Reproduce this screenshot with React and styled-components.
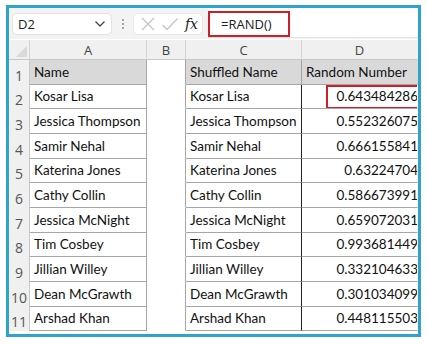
import React from 'react'
import styled, { createGlobalStyle } from 'styled-components'

const GlobalStyle = createGlobalStyle`
  html, body {
    margin: 0;
    padding: 0;
    background: #fff;
  }
  body {
    font-family: Lato, 'Liberation Sans', sans-serif;
  }
`

const Page = styled.div`
  width: 427px;
  height: 345px;
  padding: 5px 0 0 6px;
  box-sizing: border-box;
`

const Frame = styled.div`
  width: 415px;
  height: 332px;
  box-sizing: border-box;
  border: 3px solid #2ea3cb;
  overflow: hidden;
  display: flex;
  flex-direction: column;
  background: #fff;
`

const Toolbar = styled.div`
  height: 31px;
  display: flex;
  align-items: center;
  background: #f3f3f3;
  padding-left: 3px;
  flex-shrink: 0;
`

const NameBox = styled.div`
  width: 100px;
  height: 22px;
  box-sizing: border-box;
  background: #fff;
  border: 1px solid #e2e2e2;
  border-radius: 5px;
  display: flex;
  align-items: center;
  justify-content: space-between;
  padding: 0 5px 0 5px;
  font-family: 'Open Sans', sans-serif;
  font-size: 13px;
  color: #222;
`

const Dots = styled.div`
  width: 21px;
  display: flex;
  flex-direction: column;
  align-items: center;
  gap: 2px;
  span {
    width: 2px;
    height: 2px;
    background: #888;
    border-radius: 1px;
  }
`

const FxBox = styled.div`
  width: 70px;
  height: 22px;
  box-sizing: border-box;
  background: #fff;
  border: 1px solid #e8e8e8;
  border-radius: 5px;
  display: flex;
  align-items: center;
  justify-content: space-between;
  padding: 0 4px 0 6px;
`

const Fx = styled.span`
  font-family: 'DejaVu Serif', 'Liberation Serif', serif;
  font-style: italic;
  font-size: 14px;
  color: #222;
`

const FormulaBar = styled.div`
  flex: 1;
  height: 29px;
  margin-left: 5px;
  background: #fff;
  border-bottom: 1px solid #e2e2e2;
  display: flex;
  align-items: center;
  align-self: flex-start;
`

const FormulaValue = styled.div`
  width: 82px;
  height: 26px;
  box-sizing: border-box;
  border: 2px solid #cc1f28;
  display: flex;
  align-items: center;
  padding-left: 11px;
  font-size: 13px;
  color: #222;
  font-family: 'Open Sans', sans-serif;
  margin-top: 2px;
`

const Grid = styled.div`
  display: grid;
  grid-template-columns: 21px 117px 39px 116px 116px;
  grid-auto-rows: 24.67px;
  grid-template-rows: 20px;
  padding-top: 1px;
  background: #fff;
`

const ColHead = styled.div`
  background: #f0f0f0;
  border-right: 1px solid ${p => (p.$light ? '#f0f0f0' : '#d4d4d4')};
  border-bottom: 1px solid #c8c8c8;
  display: flex;
  align-items: center;
  justify-content: center;
  font-family: 'Open Sans', sans-serif;
  font-size: 13px;
  color: #444;
  position: relative;
`

const Corner = styled(ColHead)`
  &::after {
    content: '';
    position: absolute;
    right: 2px;
    bottom: 2px;
    border-style: solid;
    border-width: 0 0 11px 11px;
    border-color: transparent transparent #d9d9d9 transparent;
  }
`

const RowHead = styled.div`
  background: #f0f0f0;
  border-right: 1px solid #c8c8c8;
  display: flex;
  align-items: flex-end;
  justify-content: center;
  padding-bottom: 0;
  box-sizing: border-box;
  font-family: 'Open Sans', sans-serif;
  font-size: 14px;
  color: #555;
`

const Cell = styled.div`
  box-sizing: border-box;
  display: flex;
  align-items: center;
  justify-content: ${p => (p.$num ? 'flex-end' : 'flex-start')};
  padding: 0 ${p => (p.$num ? '0' : '4px')};
  font-size: 13.5px;
  color: #111;
  white-space: nowrap;
  overflow: hidden;
  background: ${p => (p.$head ? '#d9d9d9' : '#fff')};
  border-bottom: 1px solid ${p => (p.$blank ? 'transparent' : '#a6a6a6')};
  border-right: 1px solid ${p => p.$edge || 'transparent'};
  position: relative;
`

const Selected = styled.div`
  position: absolute;
  top: 0;
  bottom: -1px;
  left: 24px;
  right: -2px;
  border: 2px solid #cc1f28;
`

const NumText = styled.span`
  margin-right: -1px;
`

const rows = [
  ['Kosar Lisa', 'Kosar Lisa', '0.643484286'],
  ['Jessica Thompson', 'Jessica Thompson', '0.552326075'],
  ['Samir Nehal', 'Samir Nehal', '0.666155841'],
  ['Katerina Jones', 'Katerina Jones', '0.63224704'],
  ['Cathy Collin', 'Cathy Collin', '0.586673991'],
  ['Jessica McNight', 'Jessica McNight', '0.659072031'],
  ['Tim Cosbey', 'Tim Cosbey', '0.993681449'],
  ['Jillian Willey', 'Jillian Willey', '0.332104633'],
  ['Dean McGrawth', 'Dean McGrawth', '0.301034099'],
  ['Arshad Khan', 'Arshad Khan', '0.448115503'],
]

const Chevron = () => (
  <svg width="12" height="8" viewBox="0 0 12 8">
    <path d="M1.5 1.5 L6 6 L10.5 1.5" fill="none" stroke="#444" strokeWidth="1.3" />
  </svg>
)

const Cross = () => (
  <svg width="16" height="16" viewBox="0 0 16 16">
    <path d="M2 2 L14 14 M14 2 L2 14" stroke="#c4c4c4" strokeWidth="1.3" />
  </svg>
)

const Check = () => (
  <svg width="18" height="16" viewBox="0 0 18 16">
    <path d="M1.5 9 L6 13.5 L16.5 2.5" fill="none" stroke="#c4c4c4" strokeWidth="1.3" />
  </svg>
)

export default function App() {
  return (
    <>
      <GlobalStyle />
      <Page>
        <Frame>
          <Toolbar>
            <NameBox>
              <span>D2</span>
              <Chevron />
            </NameBox>
            <Dots>
              <span />
              <span />
              <span />
            </Dots>
            <FxBox>
              <Cross />
              <Check />
              <Fx>fx</Fx>
            </FxBox>
            <FormulaBar>
              <FormulaValue>=RAND()</FormulaValue>
            </FormulaBar>
          </Toolbar>
          <Grid>
            <Corner />
            <ColHead>A</ColHead>
            <ColHead>B</ColHead>
            <ColHead>C</ColHead>
            <ColHead $light>D</ColHead>

            <RowHead>1</RowHead>
            <Cell $head $edge="#a6a6a6">Name</Cell>
            <Cell $blank $edge="#a6a6a6" />
            <Cell $head $edge="#a6a6a6">Shuffled Name</Cell>
            <Cell $head>Random Number</Cell>

            {rows.map(([name, shuffled, num], i) => (
              <React.Fragment key={i}>
                <RowHead>{i + 2}</RowHead>
                <Cell $edge="#a6a6a6">{name}</Cell>
                <Cell $blank $edge="#a6a6a6" />
                <Cell $edge="#222">{shuffled}</Cell>
                <Cell $num>
                  {i === 0 && <Selected />}
                  <NumText>{num}</NumText>
                </Cell>
              </React.Fragment>
            ))}
          </Grid>
        </Frame>
      </Page>
    </>
  )
}
